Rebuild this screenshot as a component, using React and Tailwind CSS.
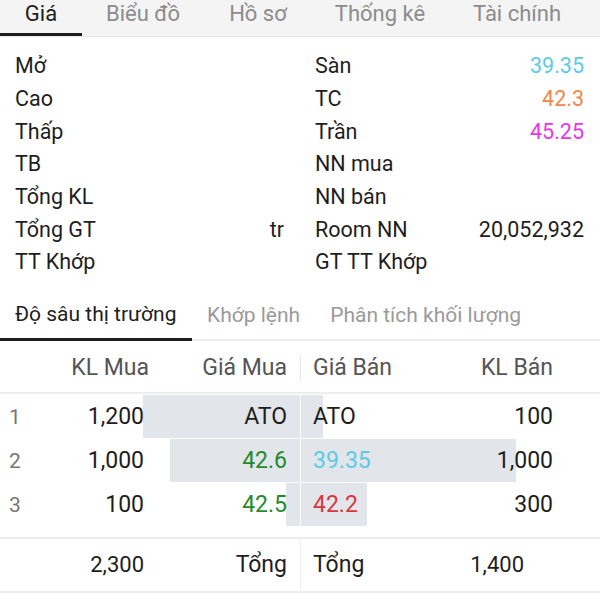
import React from "react";

const tabs = [
  { label: "Giá", w: "w-[82px]", active: true },
  { label: "Biểu đồ", w: "w-[122px]" },
  { label: "Hồ sơ", w: "w-[108px]" },
  { label: "Thống kê", w: "w-[136px]" },
  { label: "Tài chính", w: "w-[138px]" },
];

const leftInfo = [
  ["Mở", ""],
  ["Cao", ""],
  ["Thấp", ""],
  ["TB", ""],
  ["Tổng KL", ""],
  ["Tổng GT", "tr"],
  ["TT Khớp", ""],
];

const rightInfo = [
  ["Sàn", "39.35", "text-[#5ccbe6]"],
  ["TC", "42.3", "text-[#f0874a]"],
  ["Trần", "45.25", "text-[#ea35e6]"],
  ["NN mua", "", ""],
  ["NN bán", "", ""],
  ["Room NN", "20,052,932", "text-[#1e1e1e]"],
  ["GT TT Khớp", "", ""],
];

const rows = [
  { n: 1, klMua: "1,200", giaMua: "ATO", muaColor: "text-[#1e1e1e]", buyBar: 157, giaBan: "ATO", banColor: "text-[#1e1e1e]", klBan: "100", sellBar: 22 },
  { n: 2, klMua: "1,000", giaMua: "42.6", muaColor: "text-[#1f8a2e]", buyBar: 130, giaBan: "39.35", banColor: "text-[#5ccbe6]", klBan: "1,000", sellBar: 215 },
  { n: 3, klMua: "100", giaMua: "42.5", muaColor: "text-[#1f8a2e]", buyBar: 14, giaBan: "42.2", banColor: "text-[#d8363e]", klBan: "300", sellBar: 66 },
];

const DepthRow = ({ row }) => (
  <div className="flex h-[44px] border-b-[1px] border-white">
    <div className="relative flex w-[300px] items-center pt-[2px]">
      <div className="absolute right-0 top-0 bottom-0 bg-[#e2e5e9]" style={{ width: row.buyBar }} />
      <span className="relative w-[60px] pl-[9px] text-[21px] text-[#777]">{row.n}</span>
      <span className="relative w-[84px] text-right">{row.klMua}</span>
      <span className={`relative flex-1 pr-[13px] text-right ${row.muaColor}`}>{row.giaMua}</span>
    </div>
    <div className="w-[1px] bg-white" />
    <div className="relative flex flex-1 items-center pt-[2px]">
      <div className="absolute left-0 top-0 bottom-0 bg-[#e2e5e9]" style={{ width: row.sellBar }} />
      <span className={`relative flex-1 pl-[12px] ${row.banColor}`}>{row.giaBan}</span>
      <span className="relative pr-[47px] text-right">{row.klBan}</span>
    </div>
  </div>
);

export default function App() {
  return (
    <div
      className="h-[600px] w-[600px] overflow-hidden bg-white text-[21.5px] leading-[28px] text-[#1e1e1e]"
      style={{ fontFamily: "Roboto, 'Noto Sans', sans-serif" }}
    >
      <div className="flex h-[37px] border-b border-[#e8e8e8] bg-[#f4f4f4]">
        {tabs.map((t) => (
          <div
            key={t.label}
            className={`flex ${t.w} items-start justify-center text-[22px] leading-[28px] ${
              t.active ? "border-b-[3px] border-[#1e1e1e] text-[#1e1e1e]" : "text-[#8c8c8c]"
            }`}
          >
            {t.label}
          </div>
        ))}
      </div>

      <div className="flex pt-[13px]">
        <div className="w-[300px] pl-[15px] pr-[16px]">
          {leftInfo.map(([label, value]) => (
            <div key={label} className="flex h-[32.7px] items-center justify-between">
              <span>{label}</span>
              <span>{value}</span>
            </div>
          ))}
        </div>
        <div className="flex-1 pl-[15px] pr-[16px]">
          {rightInfo.map(([label, value, color]) => (
            <div key={label} className="flex h-[32.7px] items-center justify-between">
              <span>{label}</span>
              <span className={color}>{value}</span>
            </div>
          ))}
        </div>
      </div>

      <div className="mt-[12px] flex h-[50px] border-b-[2px] border-[#ececec] text-[21px]">
        <div className="-mb-[2px] flex w-[192px] items-center border-b-[3px] border-[#1e1e1e] pl-[15px]">
          Độ sâu thị trường
        </div>
        <div className="flex items-center pl-[15px] text-[#9a9a9a]">Khớp lệnh</div>
        <div className="flex items-center pl-[30px] text-[#9a9a9a]">Phân tích khối lượng</div>
      </div>

      <div className="text-[23px]">
        <div className="flex h-[53px] items-center border-b-[2px] border-[#ededed] pt-[3px] text-[#555]">
          <div className="flex w-[300px] items-center">
            <span className="w-[149px] text-right">KL Mua</span>
            <span className="flex-1 pr-[13px] text-right">Giá Mua</span>
          </div>
          <div className="h-[26px] w-[1px] bg-[#e6e6e6]" />
          <div className="flex flex-1 items-center">
            <span className="flex-1 pl-[12px]">Giá Bán</span>
            <span className="pr-[47px]">KL Bán</span>
          </div>
        </div>

        <div className="pt-[1px]">
          {rows.map((r) => (
            <DepthRow key={r.n} row={r} />
          ))}
        </div>

        <div className="mt-[10px] flex h-[56px] border-y-[2px] border-[#ededed] text-[22px]">
          <div className="flex w-[300px] items-center pt-[1px]">
            <span className="w-[144px] text-right">2,300</span>
            <span className="flex-1 pr-[13px] text-right text-[23px]">Tổng</span>
          </div>
          <div className="w-[1px] bg-[#ededed]" />
          <div className="flex flex-1 items-center pt-[1px]">
            <span className="flex-1 pl-[12px] text-[23px]">Tổng</span>
            <span className="pr-[76px]">1,400</span>
          </div>
        </div>
      </div>
    </div>
  );
}
